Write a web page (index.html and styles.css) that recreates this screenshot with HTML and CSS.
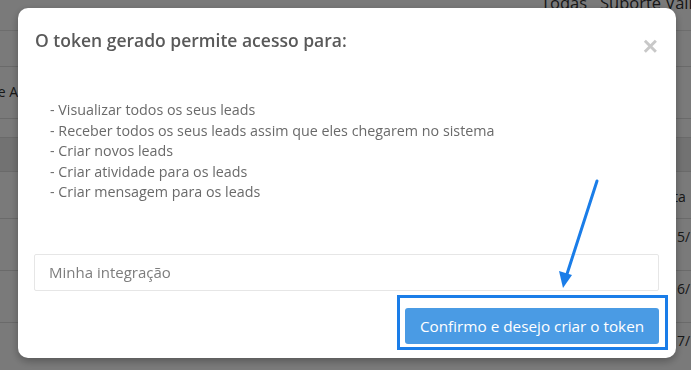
FILE: index.html
```html
<!DOCTYPE html>
<html lang="pt-BR">
<head>
  <meta charset="UTF-8" />
  <title>Gerar token</title>
  <link rel="stylesheet" href="styles.css">
</head>
<body>

  <table class="page-table">
    <colgroup>
      <col class="c-name">
      <col>
      <col class="c-tag">
      <col class="c-date">
    </colgroup>
    <tr class="row-head">
      <td class="col-name"></td>
      <td></td>
      <td class="col-tag" colspan="2">Todas&nbsp;&nbsp;&nbsp;Suporte Validação</td>
    </tr>
    <tr class="row-a"><td></td><td></td><td></td><td></td></tr>
    <tr class="row-b"><td class="col-name">Nome A</td><td></td><td></td><td></td></tr>
    <tr class="row-c"><td></td><td></td><td></td><td></td></tr>
    <tr class="row-d"><td></td><td></td><td></td><td></td></tr>
    <tr class="row-e"><td></td><td></td><td></td><td class="col-date">Data</td></tr>
    <tr class="row-f"><td></td><td></td><td></td><td class="col-date">15/10</td></tr>
    <tr class="row-f"><td></td><td></td><td></td><td class="col-date">16/10</td></tr>
    <tr class="row-f"><td></td><td></td><td></td><td class="col-date">17/10</td></tr>
  </table>

  <div class="backdrop"></div>

  <div class="modal">
    <div class="modal-header">
      <h3>O token gerado permite acesso para:</h3>
      <button class="close">&times;</button>
    </div>
    <div class="modal-body">
      <ul class="perms">
        <li>- Visualizar todos os seus leads</li>
        <li>- Receber todos os seus leads assim que eles chegarem no sistema</li>
        <li>- Criar novos leads</li>
        <li>- Criar atividade para os leads</li>
        <li>- Criar mensagem para os leads</li>
      </ul>
      <input type="text" class="name-input" placeholder="Minha integração">
    </div>
    <div class="modal-footer">
      <button class="confirm">Confirmo e desejo criar o token</button>
    </div>
  </div>

  <!-- marcação do print -->
  <div class="highlight"></div>
  <svg class="arrow" width="691" height="370" viewBox="0 0 691 370">
    <line x1="597" y1="181" x2="567" y2="274" stroke="#1a7de8" stroke-width="3" stroke-linecap="round"/>
    <polygon points="563,288 559,271 572,275" fill="#1a7de8"/>
  </svg>

</body>
</html>
```

FILE: styles.css
```css
html, body {
  margin: 0;
  padding: 0;
  height: 100%;
  overflow: hidden;
}
body {
  font-family: "Open Sans", "Liberation Sans", sans-serif;
  background: white;
  color: #333;
}

/* tabela de fundo */
.page-table {
  width: 100%;
  border-collapse: collapse;
  table-layout: fixed;
  font-size: 14px;
  line-height: 20px;
  color: #333;
  margin-top: -12px;
}
.c-name { width: 18px; }
.c-tag { width: 137px; }
.c-date { width: 22px; }
.page-table td {
  box-sizing: border-box;
  border-bottom: 1px solid #ddd;
  padding: 0;
  white-space: nowrap;
  overflow: hidden;
}
.col-name {
  text-align: right;
  direction: rtl;
}
.col-tag {
  padding-left: 9px !important;
  font-size: 16.5px;
  vertical-align: top;
  padding-top: 5px !important;
}
.col-date {
  vertical-align: top;
  padding-top: 8px !important;
}
.row-head td { height: 42px; border-bottom-color: #e4e4e4; }
.row-a td { height: 36px; }
.row-b td { height: 52px; }
.row-b .col-name { vertical-align: top; padding-top: 15px; }
.row-c td { height: 19px; }
.row-d td { height: 34px; background: #eee; }
.row-e td { height: 47px; }
.row-e .col-date { text-indent: -14px; padding-top: 15px !important; }
.row-f td { height: 52px; }

.backdrop {
  position: fixed;
  inset: 0;
  background: rgba(0, 0, 0, 0.52);
}

/* modal */
.modal {
  position: fixed;
  left: 18px;
  top: 8px;
  width: 658px;
  height: 350px;
  box-sizing: border-box;
  background: white;
  border-radius: 10px;
  box-shadow: 0 3px 9px rgba(0, 0, 0, 0.3);
  display: flex;
  flex-direction: column;
}
.modal-header {
  display: flex;
  align-items: center;
  justify-content: space-between;
  padding: 14px 18px 0 17px;
}
.modal-header h3 {
  margin: 0;
  font-size: 17.5px;
  line-height: 24px;
  font-weight: 600;
  color: #595959;
}
.close {
  background: none;
  border: none;
  padding: 0;
  font-size: 26px;
  line-height: 24px;
  font-weight: bold;
  color: #c8c8c8;
  margin-top: 12px;
  cursor: pointer;
}
.modal-body {
  padding: 0 17px 0 16px;
}
.perms {
  list-style: none;
  margin: 42px 0 0 16px;
  padding: 0;
  font-size: 14.3px;
  line-height: 20.5px;
  color: #6a6a6a;
}
.name-input {
  display: block;
  width: 100%;
  box-sizing: border-box;
  height: 37px;
  margin-top: 51px;
  padding: 0 14px;
  border: 1px solid #e6e6e6;
  border-radius: 2px;
  font-family: inherit;
  font-size: 15px;
  color: #555;
}
.name-input::placeholder {
  color: #7d7d7d;
}
.modal-footer {
  display: flex;
  justify-content: flex-end;
  padding: 17px 17px 0 16px;
}
.confirm {
  background-color: #4a9be4;
  color: white;
  border: none;
  border-radius: 3px;
  height: 36px;
  width: 254px;
  font-family: inherit;
  font-size: 15.3px;
  cursor: pointer;
}

/* marcação */
.highlight {
  position: fixed;
  left: 397px;
  top: 295px;
  width: 271px;
  height: 55px;
  box-sizing: border-box;
  border: 3px solid #1a7de8;
}
.arrow {
  position: fixed;
  left: 0;
  top: 0;
}
```
